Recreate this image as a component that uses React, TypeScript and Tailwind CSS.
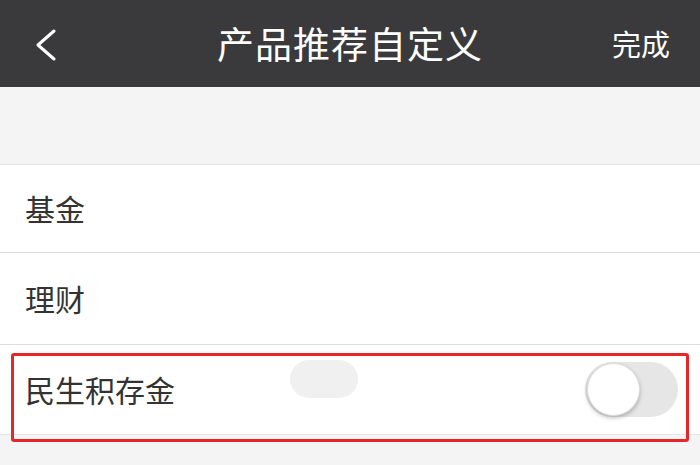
const FONT = {
  fontFamily: '"Noto Sans CJK SC", "Noto Sans", sans-serif',
};

function Toggle() {
  return (
    <div className="w-[93px] h-[55px] rounded-full bg-[#e6e6e6] flex items-center px-[2px]">
      <div className="w-[53px] h-[53px] rounded-full bg-white shadow-[0_2px_4px_rgba(0,0,0,0.25)] border border-[#dcdcdc]" />
    </div>
  );
}

export default function App() {
  return (
    <div className="w-[700px] h-[465px] bg-[#f4f4f4] overflow-hidden" style={FONT}>
      {/* Header */}
      <div className="h-[87px] bg-[#3a3a3c] grid grid-cols-[1fr_auto_1fr] items-center px-[30px]">
        <svg width="22" height="32" viewBox="0 0 22 32" fill="none" className="mt-[2px] ml-[5px]">
          <polyline
            points="19,2 3,16 19,30"
            stroke="white"
            strokeWidth="3"
            strokeLinecap="round"
            strokeLinejoin="round"
          />
        </svg>
        <div className="text-white text-[37px] leading-none tracking-[1px]">产品推荐自定义</div>
        <span className="text-white text-[29px] leading-none justify-self-end">完成</span>
      </div>

      <div className="h-[78px] border-b border-[#e4e4e4]" />

      <div className="bg-white">
        <div className="h-[88px] flex items-center px-[25px] border-b border-[#dcdcdc] text-[30px] text-[#333]">
          基金
        </div>
        <div className="h-[92px] flex items-center px-[25px] border-b border-[#dcdcdc] text-[30px] text-[#333]">
          理财
        </div>
        <div className="h-[90px] relative border-b border-[#e4e4e4] flex items-center justify-between pl-[25px] pr-[22px]">
          <span className="text-[30px] text-[#333]">民生积存金</span>
          <Toggle />
          {/* ghost highlight */}
          <div className="absolute left-[290px] top-[15px] w-[68px] h-[38px] rounded-full bg-[#f0f0f0]" />
          {/* red annotation frame */}
          <div className="absolute left-[11px] right-[11px] top-[8px] h-[89px] border-[3px] border-[#e8262a] rounded-[3px] pointer-events-none" />
        </div>
      </div>
    </div>
  );
}
